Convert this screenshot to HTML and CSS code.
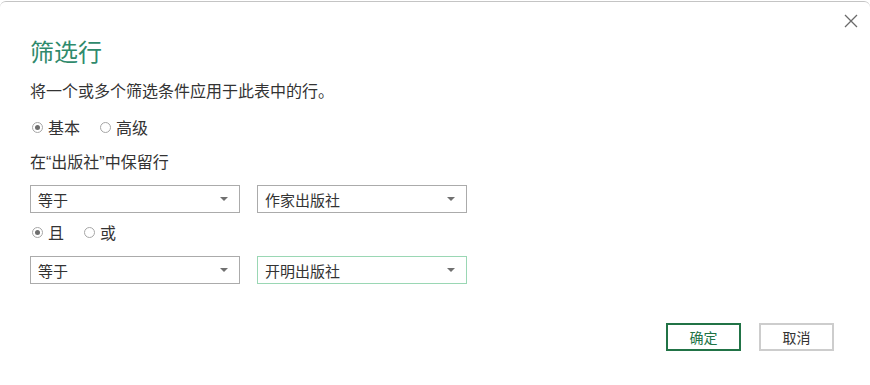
FILE: index.html
```html
<!DOCTYPE html>
<html lang="zh-CN">
<head>
<meta charset="utf-8">
<title>筛选行</title>
<link rel="stylesheet" href="styles.css">
</head>
<body>
<div class="window">
  <button class="close" aria-label="关闭">
    <svg width="14" height="14" viewBox="0 0 14 14"><path d="M1 1L13 13M13 1L1 13" stroke="#6a6a6a" stroke-width="1.3" fill="none"/></svg>
  </button>
  <h1 class="title">筛选行</h1>
  <p class="desc">将一个或多个筛选条件应用于此表中的行。</p>
  <div class="radios mode">
    <label class="radio"><span class="dot checked"></span>基本</label>
    <label class="radio"><span class="dot"></span>高级</label>
  </div>
  <p class="keep">在<span class="q">“</span>出版社<span class="q">”</span>中保留行</p>
  <div class="row">
    <div class="select"><span>等于</span><i class="arrow"></i></div>
    <div class="select"><span>作家出版社</span><i class="arrow"></i></div>
  </div>
  <div class="radios logic">
    <label class="radio"><span class="dot checked"></span>且</label>
    <label class="radio"><span class="dot"></span>或</label>
  </div>
  <div class="row">
    <div class="select"><span>等于</span><i class="arrow"></i></div>
    <div class="select focus"><span>开明出版社</span><i class="arrow"></i></div>
  </div>
  <div class="actions">
    <button class="btn primary">确定</button>
    <button class="btn">取消</button>
  </div>
</div>
</body>
</html>
```
FILE: styles.css
```css
* { box-sizing: border-box; }
html, body { margin: 0; padding: 0; background: #fff; }
body {
  font-family: "Noto Sans CJK SC", "Microsoft YaHei", sans-serif;
  color: #333;
  width: 870px;
  height: 385px;
  overflow: hidden;
}
.window {
  position: relative;
  margin-top: 1px;
  height: 384px;
  border-top: 1px solid #c4c4c4;
  border-radius: 6px 6px 0 0;
  padding: 0 0 0 30px;
}
.close {
  position: absolute;
  top: 11px;
  right: 11px;
  width: 16px;
  height: 16px;
  padding: 0;
  border: 0;
  background: none;
  display: flex;
  align-items: center;
  justify-content: center;
}
.title {
  margin: 0;
  padding-top: 33px;
  font-size: 24px;
  line-height: 32px;
  font-weight: normal;
  color: #2f8a6c;
}
.desc {
  margin: 13px 0 0;
  font-size: 16px;
  line-height: 20px;
}
.radios {
  display: flex;
  gap: 20px;
  font-size: 16px;
  line-height: 20px;
  padding-left: 2px;
}
.mode { margin-top: 17px; }
.logic { margin-top: 9px; }
.radio { display: flex; align-items: center; gap: 5px; }
.dot {
  width: 11px;
  height: 11px;
  border: 1px solid #a6a6a6;
  border-radius: 50%;
  display: flex;
  align-items: center;
  justify-content: center;
}
.dot.checked::after {
  content: "";
  width: 5px;
  height: 5px;
  border-radius: 50%;
  background: #6e6e6e;
}
.keep {
  margin: 14px 0 0;
  font-size: 16px;
  line-height: 20px;
}
.q { font-family: "Liberation Sans", sans-serif; }
.row {
  display: flex;
  gap: 17px;
  margin-top: 12px;
}
.logic + .row { margin-top: 14px; }
.select {
  width: 210px;
  height: 28px;
  border: 1px solid #ababab;
  display: flex;
  align-items: center;
  justify-content: space-between;
  padding: 0 11px 0 7px;
  font-size: 15px;
}
.select.focus { border-color: #9ad7b4; }
.arrow {
  width: 0;
  height: 0;
  border-left: 4px solid transparent;
  border-right: 4px solid transparent;
  border-top: 4px solid #707070;
}
.actions {
  display: flex;
  justify-content: flex-end;
  gap: 18px;
  margin-top: 39px;
  padding-right: 36px;
}
.btn {
  width: 75px;
  height: 28px;
  border: 2px solid #cdcdcd;
  background: #fff;
  font-family: inherit;
  font-size: 14px;
  color: #333;
  padding: 0;
}
.btn.primary { border-color: #217346; color: #217346; }
```
